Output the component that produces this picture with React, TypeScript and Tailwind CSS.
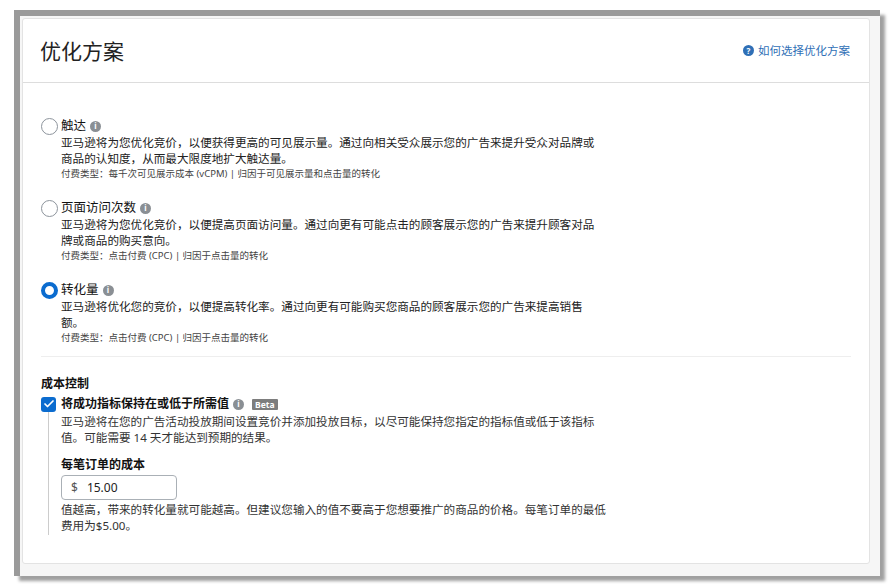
import { Check } from "lucide-react";

const font = { fontFamily: '"Noto Sans", "Noto Sans CJK SC", sans-serif' };

function Info({ dark }: { dark?: boolean }) {
  return (
    <span className={`inline-flex items-center justify-center w-[11px] h-[11px] rounded-full ${dark ? "bg-[#2f6fb6]" : "bg-[#8a8f94]"} text-white text-[8px] font-bold leading-none ml-1`}>
      {dark ? "?" : "i"}
    </span>
  );
}

function Option({ title, desc, fee, selected }: { title: string; desc: React.ReactNode; fee: string; selected?: boolean }) {
  return (
    <div className="flex flex-col">
      <div className="flex items-center h-[18px]">
        {selected ? (
          <span className="w-[17px] h-[17px] rounded-full border-[4px] border-[#0b6ccf] bg-white mr-[3px]" />
        ) : (
          <span className="w-[17px] h-[17px] rounded-full border border-[#8d949c] bg-white mr-[3px]" />
        )}
        <span className="text-[12.5px] text-[#111]">{title}</span>
        <Info />
      </div>
      <div className="pl-[20px] text-[11.6px] leading-[16px] text-[#222]">{desc}</div>
      <div className="pl-[20px] text-[9.5px] leading-[14px] text-[#444]">{fee}</div>
    </div>
  );
}

export default function App() {
  return (
    <div className="w-[890px] h-[584px] bg-white pl-[14px] pt-[10px]" style={font}>
      <div className="w-[866px] h-[566px] bg-[#f6f6f6] border-l-[6px] border-t-[6px] border-[#9a9a9a] shadow-[5px_5px_3px_#a0a0a0] pr-[10px] pb-[12px] pl-[2px] pt-[2px]">
        <div className="h-full bg-white border border-[#e3e3e3] rounded-[3px] flex flex-col">
          <div className="h-[64px] flex items-center justify-between px-[17px] border-b border-[#ddd]">
            <h1 className="text-[21px] text-[#222] pt-[2px]">优化方案</h1>
            <a className="flex items-center text-[11.5px] text-[#2f6fb6] pr-[2px]">
              <Info dark />
              <span className="ml-[4px]">如何选择优化方案</span>
            </a>
          </div>
          <div className="px-[18px] pt-[34px] flex flex-col">
            <Option
              title="触达"
              desc={<>亚马逊将为您优化竞价，以便获得更高的可见展示量。通过向相关受众展示您的广告来提升受众对品牌或<br />商品的认知度，从而最大限度地扩大触达量。</>}
              fee="付费类型：每千次可见展示成本 (vCPM) | 归因于可见展示量和点击量的转化"
            />
            <div className="h-[18px]" />
            <Option
              title="页面访问次数"
              desc={<>亚马逊将为您优化竞价，以便提高页面访问量。通过向更有可能点击的顾客展示您的广告来提升顾客对品<br />牌或商品的购买意向。</>}
              fee="付费类型：点击付费 (CPC) | 归因于点击量的转化"
            />
            <div className="h-[18px]" />
            <Option
              selected
              title="转化量"
              desc={<>亚马逊将优化您的竞价，以便提高转化率。通过向更有可能购买您商品的顾客展示您的广告来提高销售<br />额。</>}
              fee="付费类型：点击付费 (CPC) | 归因于点击量的转化"
            />
            <div className="border-b border-[#eee] mt-[11px] mb-[19px]" />
            <div className="text-[12px] font-bold text-[#111] leading-[16px]">成本控制</div>
            <div className="flex items-center mt-[4px] h-[16px]">
              <span className="w-[15px] h-[15px] rounded-[3px] bg-[#0b6ccf] flex items-center justify-center mr-[5px]">
                <Check size={12} strokeWidth={3.5} color="white" />
              </span>
              <span className="text-[12px] font-bold text-[#111]">将成功指标保持在或低于所需值</span>
              <Info />
              <span className="ml-[8px] bg-[#7d7d7d] text-white text-[8.5px] font-bold px-[3px] leading-[11px] rounded-[1px]">Beta</span>
            </div>
            <div className="ml-[7px] border-l border-[#ccc] pl-[12px] pb-[1px]">
              <div className="text-[11.6px] leading-[16px] text-[#333] pt-[2px]">
                亚马逊将在您的广告活动投放期间设置竞价并添加投放目标，以尽可能保持您指定的指标值或低于该指标<br />值。可能需要 14 天才能达到预期的结果。
              </div>
              <div className="text-[12px] font-bold text-[#111] mt-[11px] leading-[16px]">每笔订单的成本</div>
              <div className="mt-[2px] w-[116px] h-[25px] border border-[#aab0b6] rounded-[4px] flex items-center px-[9px] text-[12px] text-[#222]">
                <span className="text-[#555]">$</span>
                <span className="ml-[9px]">15.00</span>
              </div>
              <div className="text-[11.6px] leading-[16px] text-[#333] mt-[2px]">
                值越高，带来的转化量就可能越高。但建议您输入的值不要高于您想要推广的商品的价格。每笔订单的最低<br />费用为$5.00。
              </div>
            </div>
          </div>
        </div>
      </div>
    </div>
  );
}
